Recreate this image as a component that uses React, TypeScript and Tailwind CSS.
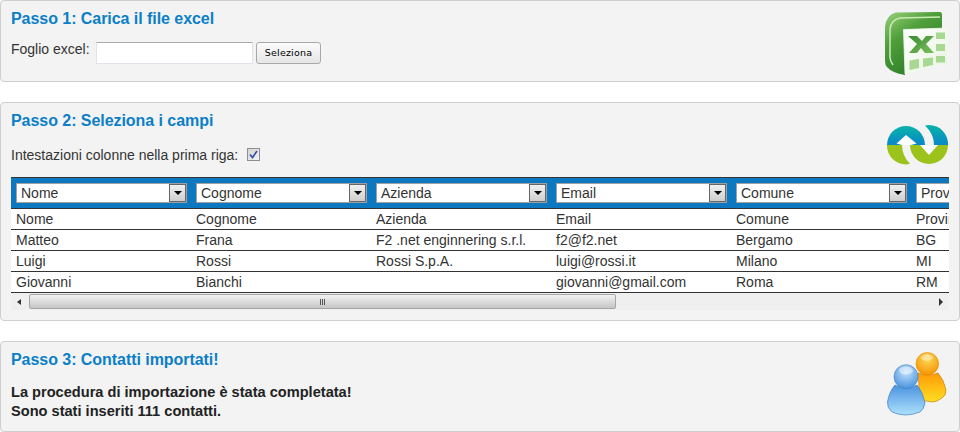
const columns = ["Nome", "Cognome", "Azienda", "Email", "Comune", "Provincia"];

const rows = [
  ["Nome", "Cognome", "Azienda", "Email", "Comune", "Provincia"],
  ["Matteo", "Frana", "F2 .net enginnering s.r.l.", "f2@f2.net", "Bergamo", "BG"],
  ["Luigi", "Rossi", "Rossi S.p.A.", "luigi@rossi.it", "Milano", "MI"],
  ["Giovanni", "Bianchi", "", "giovanni@gmail.com", "Roma", "RM"],
];

function ExcelIcon() {
  return (
    <svg width="66" height="68" viewBox="0 0 66 68" className="block">
      <defs>
        <linearGradient id="xlBack" x1="0" y1="0" x2="0.6" y2="1">
          <stop offset="0" stopColor="#9ad27a" />
          <stop offset="0.4" stopColor="#4f9f3b" />
          <stop offset="1" stopColor="#2a7a28" />
        </linearGradient>
        <linearGradient id="xlSheet" x1="0" y1="0" x2="1" y2="1">
          <stop offset="0" stopColor="#ffffff" />
          <stop offset="1" stopColor="#e6f4df" />
        </linearGradient>
        <linearGradient id="xlMark" x1="0" y1="0" x2="1" y2="1">
          <stop offset="0" stopColor="#3a8a32" />
          <stop offset="1" stopColor="#7cbf5e" />
        </linearGradient>
      </defs>
      <path d="M12 1.5 L56 1 Q58 1 58 4 L58 18 L21 19 L21 64 Q8 62 3 56 Q1 54 1 50 L1 16 Q2 4 12 1.5 Z" fill="url(#xlBack)" />
      <path d="M9 54 Q6 50 6 46 L6 18 Q7 9 16 7 L56 6" fill="none" stroke="#cbeab6" strokeWidth="1.5" />
      <path d="M19.5 18.5 L63.5 17 L63.5 52 L21 63 Z" fill="url(#xlSheet)" stroke="#f2f9ee" strokeWidth="0.8" />
      <path d="M24 25 L33 25 L38 30 L42 25 L50 25 L42 33 L50 42 L41 42 L37 37 L33 42 L25 42 L33 33 Z" fill="url(#xlMark)" />
      <rect x="52" y="21.5" width="9" height="6.5" fill="#a8d892" />
      <rect x="52" y="33" width="9" height="7" fill="#a8d892" />
      <rect x="52" y="45" width="9" height="6.5" fill="#a8d892" />
      <path d="M25.5 49.5 L35 48 L35 57 L25.5 59 Z" fill="#a8d892" />
      <path d="M39 47.5 L49 46.5 L49 54 L39 56 Z" fill="#a8d892" />
    </svg>
  );
}

function SyncIcon() {
  return (
    <svg width="62" height="40" viewBox="0 0 62 40" className="block">
      <defs>
        <linearGradient id="syncTop" x1="0" y1="0" x2="0" y2="1">
          <stop offset="0" stopColor="#07b4a8" />
          <stop offset="1" stopColor="#0a86c9" />
        </linearGradient>
      </defs>
      <path d="M0 20 A19 19 0 0 1 38 20 L0 20 Z" fill="url(#syncTop)" />
      <path d="M0 20 L15 20 Q15 31 23 38.5 Q21 39.5 19 39.5 A19 19 0 0 1 0 20 Z" fill="#9bc31c" />
      <path d="M38 0.5 Q40 0 42 0 A19 19 0 0 1 61 20 L47 20 Q47 9 38 0.5 Z" fill="url(#syncTop)" />
      <path d="M23 20 L61 20 A19 19 0 0 1 23 20 Z" fill="#9bc31c" />
      <path d="M9.5 18.5 L19 10 L29.5 18.5 L24 20 L24 20 L15 20 Z" fill="#ffffff" />
      <path d="M33 20 L51 20 L42 30 Z" fill="#ffffff" />
    </svg>
  );
}

function UsersIcon() {
  return (
    <svg width="60" height="64" viewBox="0 0 60 64" className="block">
      <defs>
        <radialGradient id="orHead" cx="0.5" cy="0.3" r="0.7">
          <stop offset="0" stopColor="#ffd95a" />
          <stop offset="1" stopColor="#f59300" />
        </radialGradient>
        <linearGradient id="orBody" x1="0" y1="0" x2="0" y2="1">
          <stop offset="0" stopColor="#ff9a08" />
          <stop offset="1" stopColor="#ffdf22" />
        </linearGradient>
        <radialGradient id="blHead" cx="0.5" cy="0.3" r="0.7">
          <stop offset="0" stopColor="#c4e3fc" />
          <stop offset="1" stopColor="#4a93de" />
        </radialGradient>
        <linearGradient id="blBody" x1="0" y1="0" x2="0" y2="1">
          <stop offset="0" stopColor="#4a93e0" />
          <stop offset="1" stopColor="#aee0fb" />
        </linearGradient>
      </defs>
      <path d="M31 21 Q41 25 51 21 Q57 28 59 38 Q59 44 55 46 Q50 50 45 50 L33 48 Z" fill="url(#orBody)" stroke="#c9801a" strokeWidth="0.7" />
      <circle cx="40.3" cy="11.8" r="11.3" fill="url(#orHead)" stroke="#e08a00" strokeWidth="0.6" />
      <path d="M8 33 Q19 40 30 33 Q36 40 38 51 Q37 57 33 60 Q18 66 5 60 Q0 56 0.5 50 Q2 40 8 33 Z" fill="url(#blBody)" stroke="#3d7fc4" strokeWidth="0.7" />
      <circle cx="19" cy="24.7" r="12" fill="url(#blHead)" stroke="#3d7fc4" strokeWidth="0.6" />
      <ellipse cx="19" cy="18.5" rx="7" ry="4" fill="#ffffff" fillOpacity="0.45" />
      <ellipse cx="40" cy="5.5" rx="6" ry="3.2" fill="#ffffff" fillOpacity="0.4" />
    </svg>
  );
}

function SelectBox({ label }: { label: string }) {
  return (
    <div className="w-[171px] h-[20px] mr-[9px] shrink-0 bg-white border border-[#a0a0a0] flex items-center justify-between">
      <span className="pl-1 text-[14px] leading-[18px] text-[#333]">{label}</span>
      <span className="w-[17px] h-[18px] border border-[#666] bg-gradient-to-b from-[#f0f0f0] to-[#cfcfcf] flex items-center justify-center">
        <span className="w-0 h-0 border-x-[4px] border-x-transparent border-t-[4px] border-t-black" />
      </span>
    </div>
  );
}

function Panel({
  title,
  icon,
  height,
  children,
}: {
  title: string;
  icon: React.ReactNode;
  height: string;
  children: React.ReactNode;
}) {
  return (
    <section className={`relative ${height} bg-[#f3f3f3] border border-[#cfcfcf] rounded-[4px] pl-[10px] pr-[10px]`}>
      <h2 className="mt-[9px] text-[16px] leading-[18px] font-bold tracking-[-0.05px] text-[#0b7fc7]">{title}</h2>
      {icon}
      {children}
    </section>
  );
}

export default function App() {
  return (
    <div className="w-[960px] h-[432px] bg-white overflow-hidden flex flex-col gap-[20px] font-['Liberation_Sans',Arial,sans-serif] text-[14px] text-[#333]">
      <Panel
        title="Passo 1: Carica il file excel"
        height="h-[82px]"
        icon={
          <div className="absolute top-[10px] right-[9px]">
            <ExcelIcon />
          </div>
        }
      >
        <div className="mt-[12px] flex items-start">
          <span className="leading-[18px] w-[85px]">Foglio excel:</span>
          <div className="mt-[2px] w-[157px] h-[22px] bg-white border border-[#e2e2ea] border-t-[#ababab]" />
          <button className="mt-[2px] ml-[3px] w-[65px] h-[22px] rounded-[3px] border border-[#a8a8a8] bg-gradient-to-b from-[#fbfbfb] to-[#e6e6e6] font-['DejaVu_Sans',sans-serif] text-[9.5px] text-black tracking-[0.2px]">
            Seleziona
          </button>
        </div>
      </Panel>

      <Panel
        title="Passo 2: Seleziona i campi"
        height="h-[219px]"
        icon={
          <div className="absolute top-[22px] right-[10px]">
            <SyncIcon />
          </div>
        }
      >
        <div className="mt-[16px] flex items-center h-[18px]">
          <span className="leading-[18px]">Intestazioni colonne nella prima riga:</span>
          <span className="ml-[9px] -mt-[2px] w-[13px] h-[13px] border border-[#8e8f8f] bg-gradient-to-br from-[#d4d4d8] to-[#f4f4f4] flex items-center justify-center">
            <svg width="9" height="9" viewBox="0 0 9 9">
              <path d="M1 4.5 L3.5 7.5 L8 1" fill="none" stroke="#3b4fa8" strokeWidth="1.7" />
            </svg>
          </span>
        </div>

        <div className="mt-[13px] w-[938px] overflow-hidden">
          <div className="border-y border-[#333] bg-[#0b78c0] h-[32px] pl-[5px] flex items-center w-[1120px]">
            {columns.map((c) => (
              <SelectBox key={c} label={c} />
            ))}
          </div>
          {rows.map((row) => (
            <div key={row[0]} className="h-[21px] bg-white border-b border-[#333] pl-[5px] flex w-[1120px] leading-[20px]">
              {row.map((cell, i) => (
                <span key={i} className="w-[180px] shrink-0 truncate">
                  {cell}
                </span>
              ))}
            </div>
          ))}
          <div className="h-[17px] bg-[#efefef] flex items-center relative">
            <span className="ml-[6px] w-0 h-0 border-y-[3px] border-y-transparent border-r-[4px] border-r-[#333]" />
            <div className="ml-[8px] w-[587px] h-[15px] rounded-[2px] border border-[#a6a6a6] bg-gradient-to-b from-[#f2f2f2] to-[#c6c6c6] flex items-center justify-center gap-px">
              <span className="w-px h-[6px] bg-[#555]" />
              <span className="w-px h-[6px] bg-[#555]" />
              <span className="w-px h-[6px] bg-[#555]" />
            </div>
            <span className="absolute right-[6px] w-0 h-0 border-y-[4px] border-y-transparent border-l-[4px] border-l-[#333]" />
          </div>
        </div>
      </Panel>

      <Panel
        title="Passo 3: Contatti importati!"
        height="h-[91px]"
        icon={
          <div className="absolute top-[10px] right-[12px]">
            <UsersIcon />
          </div>
        }
      >
        <p className="mt-[14px] font-bold text-[14.6px] leading-[19px] text-[#222]">
          La procedura di importazione è stata completata!
          <br />
          Sono stati inseriti 111 contatti.
        </p>
      </Panel>
    </div>
  );
}
